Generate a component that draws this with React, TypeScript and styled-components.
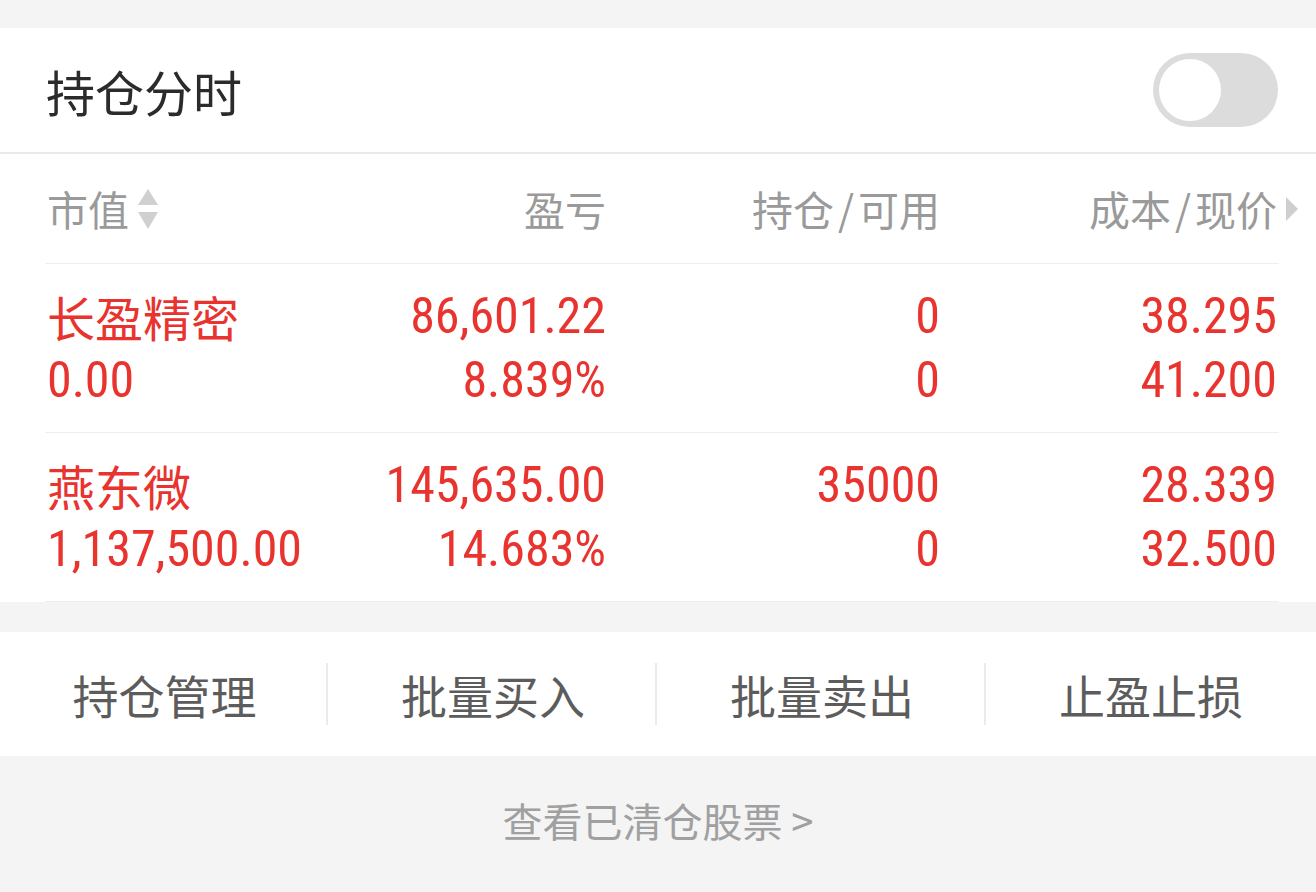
import React from "react";
import styled, { createGlobalStyle } from "styled-components";

const GlobalStyle = createGlobalStyle`
  html, body {
    margin: 0;
    padding: 0;
    background: #f4f4f4;
  }
  body {
    font-family: "Noto Sans CJK SC", "Noto Sans", sans-serif;
  }
  * { box-sizing: border-box; }
`;

const RED = "#e8332f";
const NUM_FONT = `"Liberation Sans Narrow", "Roboto Condensed", "DejaVu Sans Condensed", "Liberation Sans", sans-serif`;
const CJK_FONT = `"Noto Sans CJK SC", "Noto Sans", sans-serif`;

const Page = styled.div`
  width: 1316px;
  min-height: 892px;
  padding-top: 28px;
  background: #f4f4f4;
`;

const Header = styled.div`
  height: 126px;
  background: #fff;
  display: flex;
  align-items: center;
  justify-content: space-between;
  padding: 0 38px 0 46px;
  border-bottom: 2px solid #e9e9e9;
`;

const Title = styled.div`
  font-family: ${CJK_FONT};
  font-size: 49px;
  color: #2b2b2b;
  line-height: 1;
`;

const Toggle = styled.div`
  width: 125px;
  height: 74px;
  border-radius: 37px;
  background: #dcdcdc;
  padding: 6px;
  display: flex;
  align-items: center;
`;

const Knob = styled.div`
  width: 62px;
  height: 62px;
  border-radius: 50%;
  background: #fff;
`;

const Table = styled.div`
  background: #fff;
  padding: 0 37px 0 45px;
`;

const Grid = styled.div`
  display: grid;
  grid-template-columns: 260px 299px 334px 337px;
  padding: 0 2px;
  border-bottom: 1px solid #eeeeee;
`;

const HeadRow = styled(Grid)`
  height: 110px;
  align-items: center;
`;

const HeadCell = styled.div<{ $align?: "left" | "right" }>`
  display: flex;
  align-items: center;
  justify-content: ${(p) => (p.$align === "left" ? "flex-start" : "flex-end")};
  font-family: ${CJK_FONT};
  font-size: 41px;
  color: #9a9a9a;
  line-height: 1;
  white-space: nowrap;
`;

const Slash = styled.span`
  margin: 0 4px;
`;

const SortIcon = styled.svg`
  width: 22px;
  height: 44px;
  margin-left: 8px;
  flex: none;
`;

const MoreIcon = styled.svg`
  width: 14px;
  height: 26px;
  margin-left: 8px;
  margin-right: -22px;
  flex: none;
`;

const DataRow = styled(Grid)`
  padding-top: 20px;
  padding-bottom: 20px;
`;

const Cell = styled.div<{ $align?: "left" | "right" }>`
  display: flex;
  flex-direction: column;
  align-items: ${(p) => (p.$align === "left" ? "flex-start" : "flex-end")};
`;

const Line = styled.div<{ $cjk?: boolean }>`
  height: 64px;
  line-height: 64px;
  font-family: ${(p) => (p.$cjk ? CJK_FONT : NUM_FONT)};
  font-size: ${(p) => (p.$cjk ? "48px" : "50px")};
  color: ${RED};
  white-space: nowrap;
`;

const Actions = styled.div`
  margin-top: 30px;
  height: 124px;
  background: #fff;
  display: grid;
  grid-template-columns: repeat(4, 1fr);
  align-items: center;
`;

const Action = styled.div<{ $divider?: boolean }>`
  height: 62px;
  display: flex;
  align-items: center;
  justify-content: center;
  font-family: ${CJK_FONT};
  font-size: 46px;
  color: #5c5c5c;
  border-left: ${(p) => (p.$divider ? "2px solid #ebebeb" : "none")};
  margin-left: ${(p) => (p.$divider ? "-3px" : "0")};
`;

const Footer = styled.div`
  padding-top: 44px;
  text-align: center;
  font-family: ${CJK_FONT};
  font-size: 40px;
  line-height: 40px;
  color: #a0a0a0;
`;

type Row = {
  name: string;
  value: string;
  pl: string;
  plPct: string;
  hold: string;
  avail: string;
  cost: string;
  price: string;
};

const rows: Row[] = [
  {
    name: "长盈精密",
    value: "0.00",
    pl: "86,601.22",
    plPct: "8.839%",
    hold: "0",
    avail: "0",
    cost: "38.295",
    price: "41.200",
  },
  {
    name: "燕东微",
    value: "1,137,500.00",
    pl: "145,635.00",
    plPct: "14.683%",
    hold: "35000",
    avail: "0",
    cost: "28.339",
    price: "32.500",
  },
];

export default function App() {
  return (
    <>
      <GlobalStyle />
      <Page>
        <Header>
          <Title>持仓分时</Title>
          <Toggle>
            <Knob />
          </Toggle>
        </Header>
        <Table>
          <HeadRow>
            <HeadCell $align="left">
              市值
              <SortIcon viewBox="0 0 22 44">
                <polygon points="11,2 21,18 1,18" fill="#d0d0d0" />
                <polygon points="1,25 21,25 11,42" fill="#d0d0d0" />
              </SortIcon>
            </HeadCell>
            <HeadCell>盈亏</HeadCell>
            <HeadCell>
              持仓<Slash>/</Slash>可用
            </HeadCell>
            <HeadCell>
              成本<Slash>/</Slash>现价
              <MoreIcon viewBox="0 0 14 26">
                <polygon points="1,1 13,13 1,25" fill="#cfcfcf" />
              </MoreIcon>
            </HeadCell>
          </HeadRow>
          {rows.map((r) => (
            <DataRow key={r.name}>
              <Cell $align="left">
                <Line $cjk>{r.name}</Line>
                <Line>{r.value}</Line>
              </Cell>
              <Cell>
                <Line>{r.pl}</Line>
                <Line>{r.plPct}</Line>
              </Cell>
              <Cell>
                <Line>{r.hold}</Line>
                <Line>{r.avail}</Line>
              </Cell>
              <Cell>
                <Line>{r.cost}</Line>
                <Line>{r.price}</Line>
              </Cell>
            </DataRow>
          ))}
        </Table>
        <Actions>
          <Action>持仓管理</Action>
          <Action $divider>批量买入</Action>
          <Action $divider>批量卖出</Action>
          <Action $divider>止盈止损</Action>
        </Actions>
        <Footer>查看已清仓股票 &gt;</Footer>
      </Page>
    </>
  );
}
